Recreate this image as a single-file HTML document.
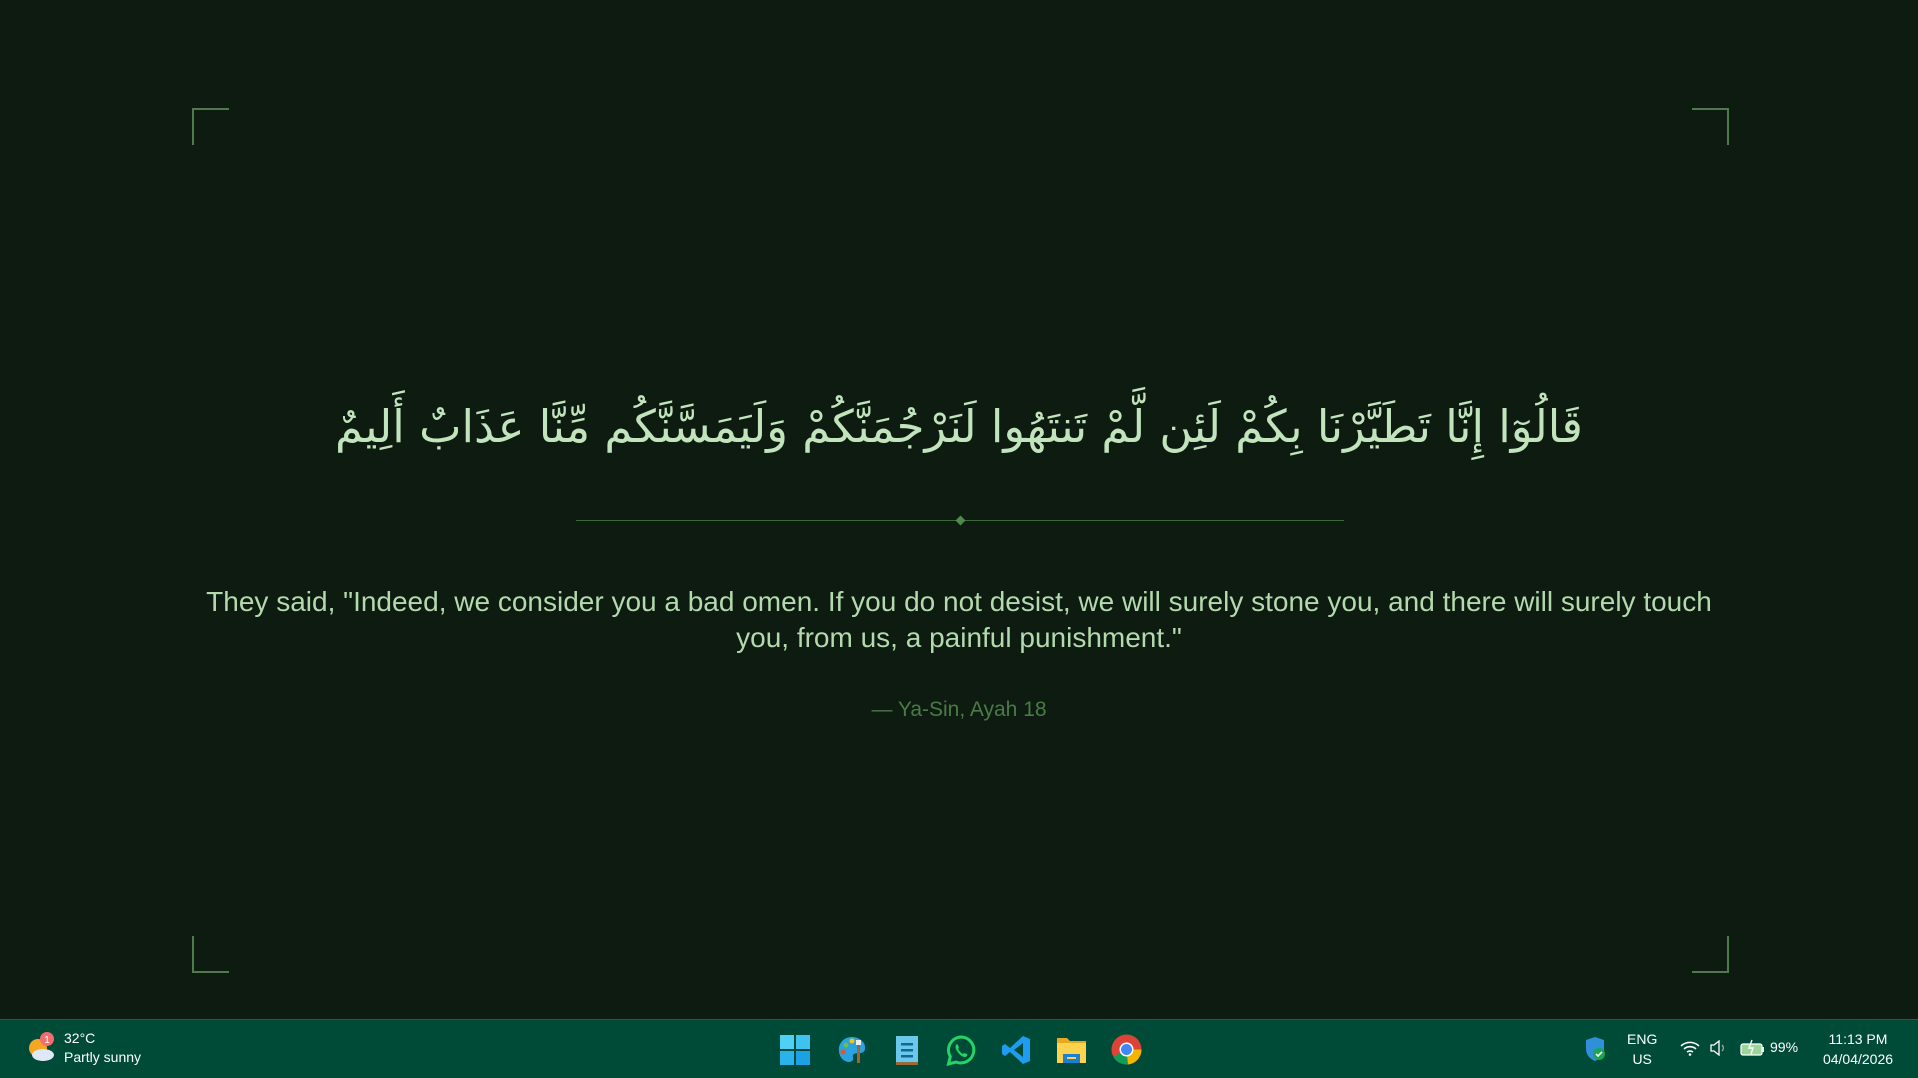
<!DOCTYPE html>
<html><head><meta charset="utf-8"><style>
*{margin:0;padding:0;box-sizing:border-box}
body{width:1918px;height:1078px;background:#0d1b10;position:relative;overflow:hidden;font-family:"Liberation Sans",sans-serif}
.c{position:absolute;width:37px;height:37px;border-color:#4f7a4c;border-style:solid;border-width:0}
.ar{position:absolute;left:0;width:1918px;top:372px;text-align:center;direction:rtl;font-family:"DejaVu Sans",sans-serif;font-size:45px;color:#c2e4bd;line-height:110px;white-space:nowrap}
.div{position:absolute;left:576px;width:768px;top:520px;height:1px;background:#3d6a3b}
.dia{position:absolute;left:957px;top:517px;width:7px;height:7px;background:#4f8a4c;transform:rotate(45deg)}
.en{position:absolute;left:100px;width:1718px;top:584px;text-align:center;color:#b4d9ae;font-size:28px;line-height:36px;white-space:nowrap}
.at{position:absolute;left:0;width:1918px;top:698px;text-align:center;color:#4b7a48;font-size:21px}
.tb{position:absolute;left:0;top:1019px;width:1918px;height:59px;background:#004b38;border-top:1px solid #1f5e4c}
.tb svg{position:absolute}
.t{position:absolute;color:#fff;font-size:14px;line-height:19px}
</style></head><body>
<div class="c" style="left:192px;top:108px;border-left-width:2px;border-top-width:2px"></div>
<div class="c" style="left:1692px;top:108px;border-right-width:2px;border-top-width:2px"></div>
<div class="c" style="left:192px;top:936px;border-left-width:2px;border-bottom-width:2px"></div>
<div class="c" style="left:1692px;top:936px;border-right-width:2px;border-bottom-width:2px"></div>
<div class="ar">قَالُوٓا إِنَّا تَطَيَّرْنَا بِكُمْ لَئِن لَّمْ تَنتَهُوا لَنَرْجُمَنَّكُمْ وَلَيَمَسَّنَّكُم مِّنَّا عَذَابٌ أَلِيمٌ</div>
<div class="div"></div><div class="dia"></div>
<div class="en">They said, "Indeed, we consider you a bad omen. If you do not desist, we will surely stone you, and there will surely touch<br>you, from us, a painful punishment."</div>
<div class="at">— Ya-Sin, Ayah 18</div>
<div class="tb">
<svg style="left:26px;top:12px" width="32" height="32"><circle cx="12" cy="16" r="9" fill="#f5a623"/><ellipse cx="17" cy="23" rx="11" ry="6" fill="#dfe8f5"/><circle cx="21" cy="7" r="7" fill="#f26d6d"/><text x="21" y="11" fill="#fff" font-size="10" text-anchor="middle" font-family="Liberation Sans">1</text></svg>
<div class="t" style="left:64px;top:9px">32°C<br>Partly sunny</div>
<svg style="left:780px;top:15px" width="30" height="30"><rect x="0" y="0" width="14" height="14" fill="#4fd0f5"/><rect x="16" y="0" width="14" height="14" fill="#3ec3f0"/><rect x="0" y="16" width="14" height="14" fill="#29b2ec"/><rect x="16" y="16" width="14" height="14" fill="#1aa1e6"/></svg>
<svg style="left:837px;top:15px" width="30" height="30"><path d="M15 2C6 2 1 9 2 17c1 8 9 12 13 9 3-2-1-5 2-7 3-2 10 1 11-5C29 7 22 2 15 2z" fill="#2aa3e0"/><circle cx="9" cy="10" r="2.5" fill="#6cc04a"/><circle cx="15" cy="6" r="2.5" fill="#f4c21b"/><circle cx="6" cy="17" r="2.5" fill="#e8532d"/><rect x="20" y="8" width="3" height="20" fill="#a0642e"/><rect x="19" y="5" width="5" height="5" fill="#eee"/></svg>
<svg style="left:895px;top:14px" width="24" height="32"><rect x="1" y="2" width="22" height="28" fill="#6cc7ec"/><rect x="1" y="28" width="22" height="3" fill="#9b6a3a"/><rect x="6" y="9" width="12" height="2.5" fill="#14688f"/><rect x="6" y="15" width="12" height="2.5" fill="#14688f"/><rect x="6" y="21" width="12" height="2.5" fill="#14688f"/></svg>
<svg style="left:946px;top:15px" width="31" height="31"><path d="M15.5 2a13 13 0 0 0-11.2 19.6L2.5 29l7.6-1.9A13 13 0 1 0 15.5 2z" fill="none" stroke="#25d366" stroke-width="3"/><path d="M11 9c-2 1-2 4 0 7s5 6 8 6c2 0 3-2 2-3l-3-1-1 1c-2-1-4-3-5-5l1-1-1-3z" fill="#25d366"/></svg>
<svg style="left:1001px;top:15px" width="30" height="30"><path d="M22 1L29 4v22l-7 3L9 17l-5 4-3-2V11l3-2 5 4z" fill="#1f9cf0"/><path d="M22 8v14l-9-7z" fill="#004b38"/></svg>
<svg style="left:1056px;top:14px" width="31" height="31"><path d="M1 4h10l3 3h16v22H1z" fill="#e8a820"/><rect x="1" y="9" width="29" height="20" fill="#fcd34d"/><rect x="7" y="20" width="17" height="9" fill="#1d80d6"/><rect x="11" y="23" width="9" height="2" fill="#fcd34d"/></svg>
<svg style="left:1111px;top:14px" width="31" height="31"><circle cx="15.5" cy="15.5" r="15" fill="#db4437"/><path d="M15.5 15.5L2.5 23A15 15 0 0 0 17 30.5z" fill="#0f9d58"/><path d="M15.5 15.5H30.5A15 15 0 0 1 17 30.5z" fill="#f4b400"/><circle cx="15.5" cy="15.5" r="7" fill="#fff"/><circle cx="15.5" cy="15.5" r="5.5" fill="#4285f4"/></svg>
<svg style="left:1585px;top:16px" width="22" height="26"><path d="M10 1l9 3v9c0 6-4 10-9 12C5 23 1 19 1 13V4z" fill="#2f8fd8"/><circle cx="14" cy="18" r="6" fill="#19a551"/><path d="M11 18l2 2 4-4" stroke="#fff" stroke-width="1.6" fill="none"/></svg>
<div class="t" style="left:1627px;top:9px;text-align:center;font-size:14px;line-height:20px">ENG<br>US</div>
<svg style="left:1680px;top:20px" width="20" height="16"><path d="M1 6a13 13 0 0 1 18 0M4 9a9 9 0 0 1 12 0M7 12a5 5 0 0 1 6 0" stroke="#fff" stroke-width="1.6" fill="none"/><circle cx="10" cy="14.5" r="1.3" fill="#fff"/></svg>
<svg style="left:1709px;top:20px" width="20" height="16"><path d="M2 5h3l5-4v14l-5-4H2z" stroke="#fff" stroke-width="1.3" fill="none"/><path d="M13 5a4 4 0 0 1 0 6" stroke="#aaa" stroke-width="1.2" fill="none"/></svg>
<svg style="left:1740px;top:19px" width="26" height="18"><rect x="1" y="5" width="21" height="11" rx="2" fill="#9ad69a" stroke="#fff" stroke-width="1.3"/><rect x="22" y="8" width="2" height="5" fill="#fff"/><path d="M12 1l-3 8h4l-2 6" stroke="#fff" stroke-width="1.4" fill="none"/></svg>
<div class="t" style="left:1770px;top:18px">99%</div>
<div class="t" style="left:1810px;top:9px;width:96px;text-align:center;line-height:20px">11:13 PM<br>04/04/2026</div>
</div>
</body></html>
